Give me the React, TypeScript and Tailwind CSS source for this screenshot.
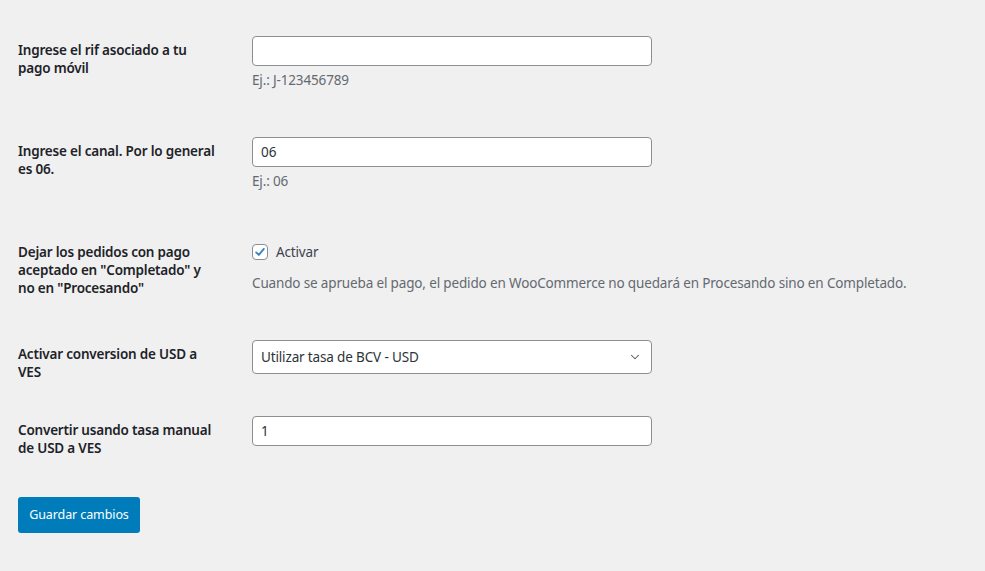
import { ChevronDown } from "lucide-react"

const font = { fontFamily: '"Noto Sans", "Open Sans", sans-serif' }

function Label({ lines }: { lines: string[] }) {
  return (
    <div className="w-[224px] shrink-0 pt-[20px] pr-[24px] text-[13.5px] font-semibold leading-[18.2px] tracking-[-0.2px] text-[#1d2327] whitespace-nowrap">
      {lines.map((l, i) => (
        <div key={i}>{l}</div>
      ))}
    </div>
  )
}

function TextField({ value = "", hint }: { value?: string; hint?: string }) {
  return (
    <div className="pl-[10px] pt-[15px] pb-[32px]">
      <input
        defaultValue={value}
        className="block h-[30px] w-[400px] rounded-[4px] border border-[#8c8f94] bg-white px-[8px] text-[13.5px] text-[#2c3338] outline-none"
        style={font}
      />
      {hint && (
        <p className="mt-[4px] text-[13.5px] leading-[20px] tracking-[-0.15px] text-[#646970]">{hint}</p>
      )}
    </div>
  )
}

export default function App() {
  return (
    <div className="min-h-[571px] bg-[#f0f0f1] px-[18px] pt-[21px]" style={font}>
      {/* rif */}
      <div className="flex">
        <Label lines={["Ingrese el rif asociado a tu", "pago móvil"]} />
        <TextField hint="Ej.: J-123456789" />
      </div>

      {/* canal */}
      <div className="flex">
        <Label lines={["Ingrese el canal. Por lo general", "es 06."]} />
        <TextField value="06" hint="Ej.: 06" />
      </div>

      {/* completado */}
      <div className="flex h-[102px]">
        <Label lines={["Dejar los pedidos con pago", 'aceptado en "Completado" y', 'no en "Procesando"']} />
        <div className="pl-[10px] pt-[15px]">
          <label className="flex items-center gap-[8px] h-[28px] text-[13.5px] tracking-[-0.15px] text-[#3c434a]">
            <span className="flex h-[16px] w-[16px] items-center justify-center rounded-[4px] border border-[#8c8f94] bg-white">
              <svg width="14" height="14" viewBox="0 0 20 20">
                <path d="M4.5 10.5 L8.3 14.2 L15.5 5.5" fill="none" stroke="#3582c4" strokeWidth="2.6" strokeLinecap="round" strokeLinejoin="round" />
              </svg>
            </span>
            Activar
          </label>
          <p className="mt-[7px] text-[13.5px] leading-[20px] tracking-[-0.15px] text-[#646970] whitespace-nowrap">
            Cuando se aprueba el pago, el pedido en WooCommerce no quedará en Procesando sino en Completado.
          </p>
        </div>
      </div>

      {/* conversion */}
      <div className="flex h-[76px]">
        <Label lines={["Activar conversion de USD a", "VES"]} />
        <div className="pl-[10px] pt-[15px]">
          <div className="flex h-[34px] w-[400px] items-center justify-between rounded-[4px] border border-[#8c8f94] bg-white pl-[8px] pr-[9px] text-[13.5px] tracking-[-0.15px] text-[#2c3338]">
            <span>Utilizar tasa de BCV - USD</span>
            <ChevronDown size={14} strokeWidth={1.8} className="text-[#50575e]" />
          </div>
        </div>
      </div>

      {/* tasa manual */}
      <div className="flex h-[76px]">
        <Label lines={["Convertir usando tasa manual", "de USD a VES"]} />
        <div className="pl-[10px] pt-[15px]">
          <input
            defaultValue="1"
            className="block h-[30px] w-[400px] rounded-[4px] border border-[#8c8f94] bg-white px-[8px] text-[13.5px] text-[#2c3338] outline-none"
            style={font}
          />
        </div>
      </div>

      <button className="mt-[20px] h-[36px] w-[122px] rounded-[3px] bg-[#007cba] text-[12.5px] tracking-[-0.1px] text-white" style={font}>
        Guardar cambios
      </button>
    </div>
  )
}
